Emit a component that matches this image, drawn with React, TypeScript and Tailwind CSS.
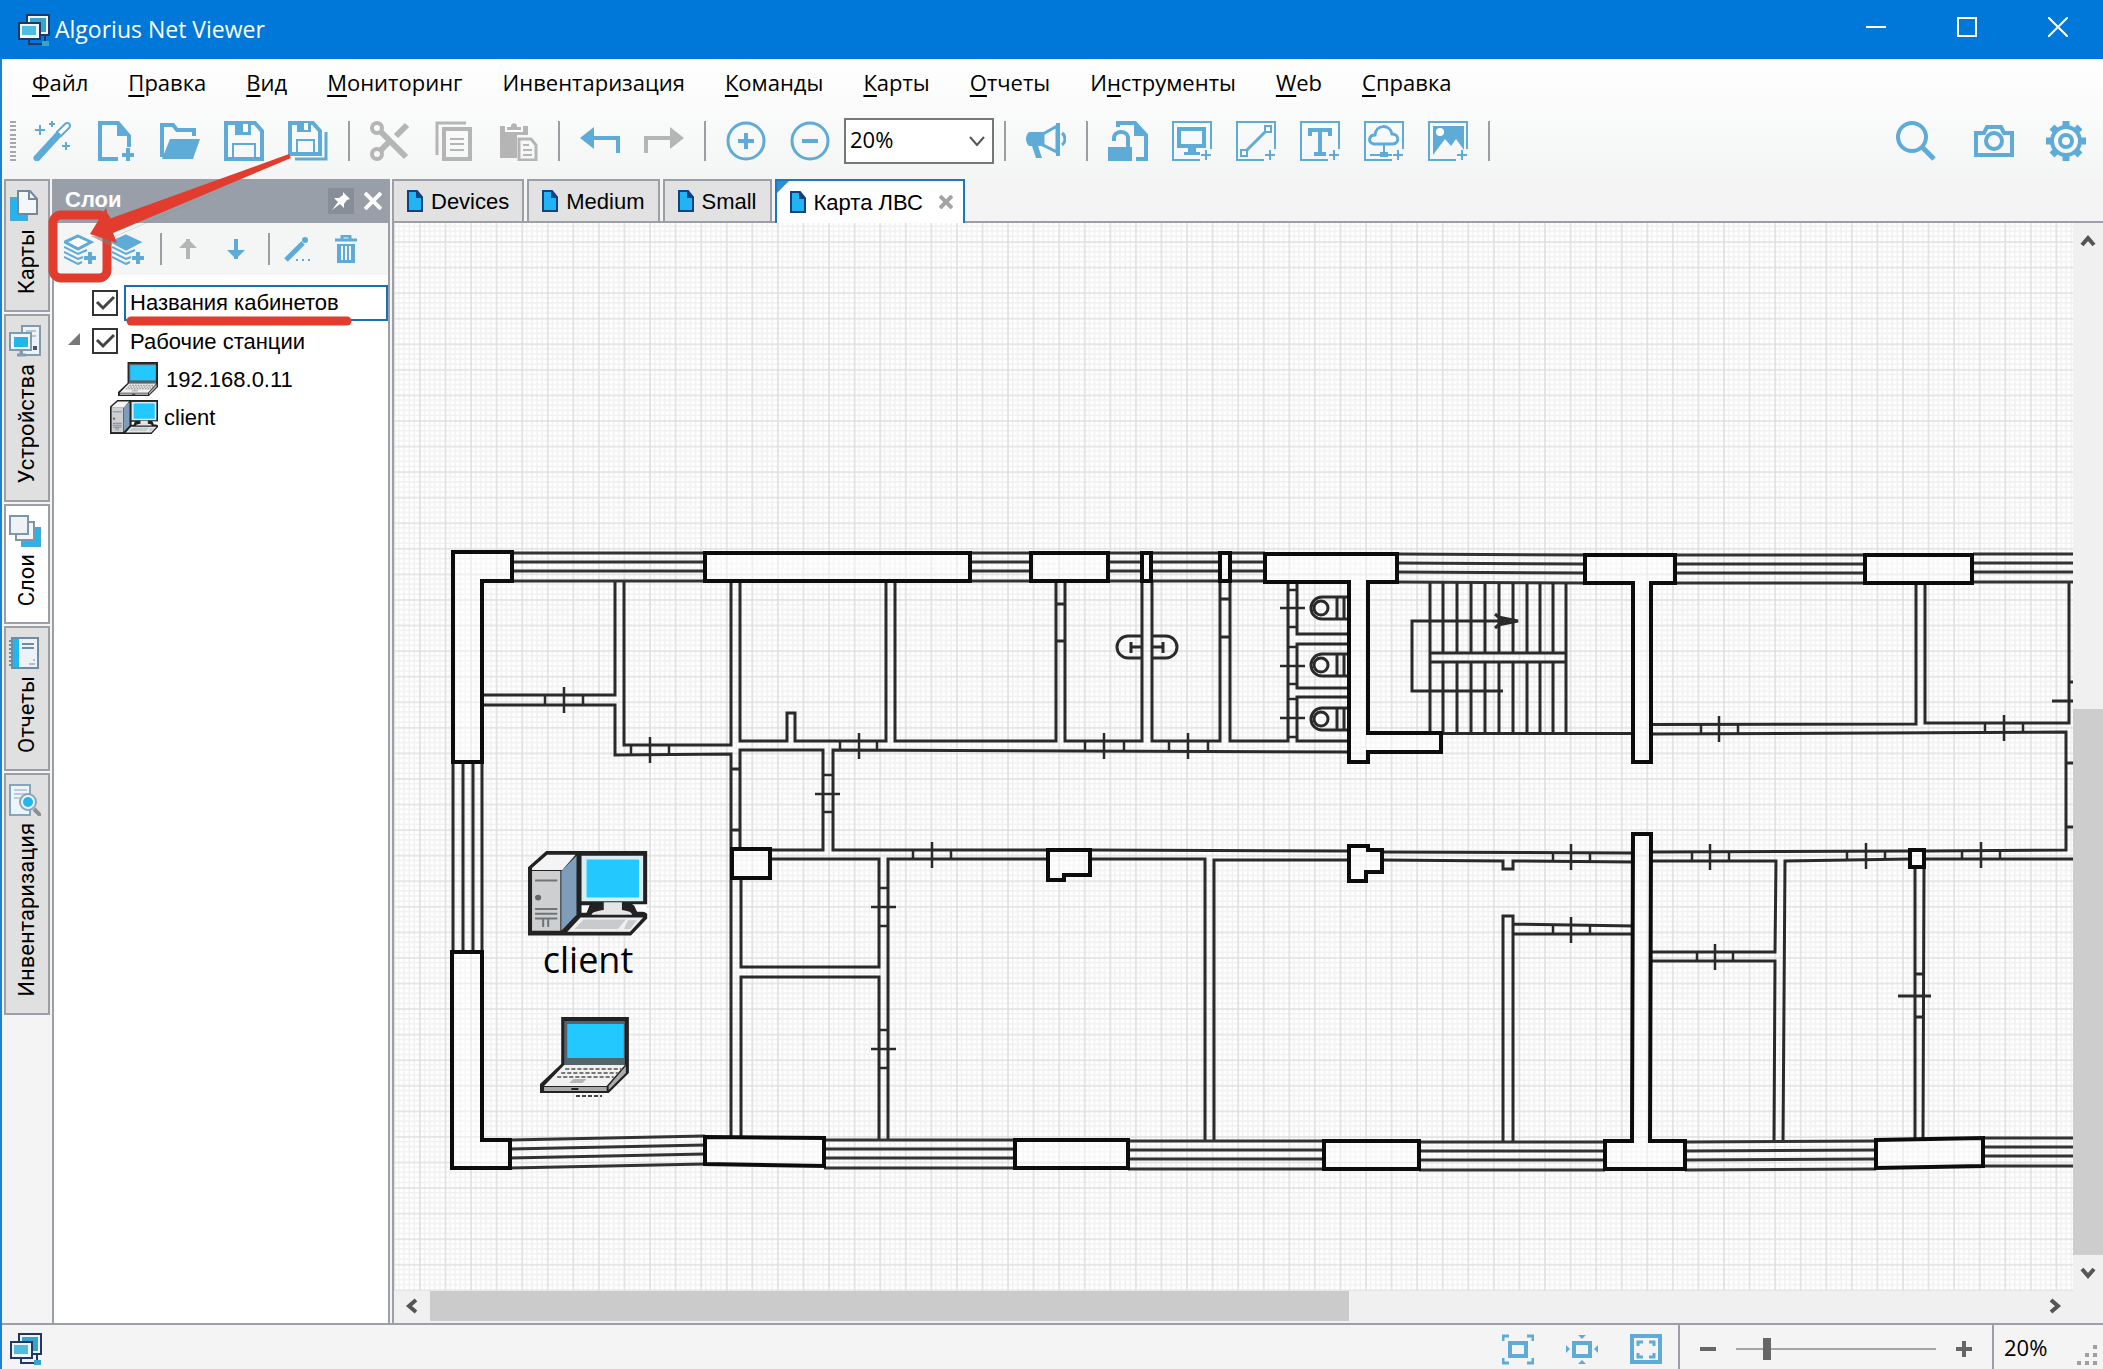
import { useState } from "react";
import type { ReactNode } from "react";

const BLUE = "#5fabd8";
const GREY = "#b5b5b5";

type IconProps = { size?: number; color?: string; children: ReactNode };

const Icon = ({ size = 40, color = BLUE, children }: IconProps) => (
  <svg width={size} height={size} viewBox={`0 0 ${size} ${size}`} fill="none" stroke={color} color={color} strokeWidth="4" aria-hidden="true">
    {children}
  </svg>
);

/* Frame with a small plus, shared by the "insert object" buttons */
const Framed = ({ children }: { children: ReactNode }) => (
  <Icon>
    <path d="M39 28V1H1v38h27M34 29v10M29 34h10" strokeWidth="2" />
    {children}
  </Icon>
);

const WandIcon = () => (
  <Icon>
    <path d="M5 37 27 13" strokeWidth="7" strokeLinecap="round" />
    <path d="m25 11 8-8c3-3 7 1 4 4l-8 8z" strokeWidth="2" fill="#fff" />
    <path d="M8 4v10M3 9h10M20 0v6M17 3h6M34 21v8M30 25h8" strokeWidth="2" />
  </Icon>
);

const NewIcon = () => (
  <Icon>
    <path d="M22 38H4V2h18l11 13v11" />
    <path d="M21 0v15h13z" fill={BLUE} stroke="none" />
    <path d="M32 27v13M26 34h12" />
  </Icon>
);

const OpenIcon = () => (
  <Icon>
    <path d="M2 36V4h11l4 5h17v6" />
    <path d="M10 18h30l-7 20H2z" fill={BLUE} stroke="none" />
  </Icon>
);

const SaveIcon = () => (
  <Icon>
    <path d="M2 2h29l7 8v28H2z" strokeWidth="4" />
    <path d="M11 0h16v14H11z" fill={BLUE} stroke="none" />
    <path d="M19 3h5v8h-5z" fill="#fff" stroke="none" />
    <path d="M9 38V23h22v15" strokeWidth="2" />
  </Icon>
);

const SaveAllIcon = () => (
  <Icon>
    <path d="M2 2h23l7 8v23H2z" />
    <path d="M9 0h14v11H9z" fill={BLUE} stroke="none" />
    <path d="M16 2h4v7h-4z" fill="#fff" stroke="none" />
    <path d="M9 32V19h17v13" strokeWidth="2" />
    <path d="M38 11v27H7" strokeWidth="3" />
  </Icon>
);

const CutIcon = () => (
  <Icon color={GREY}>
    <circle cx="7" cy="7" r="5" strokeWidth="4" />
    <circle cx="7" cy="33" r="5" strokeWidth="4" />
    <path d="m11 29 10-10M26 15 37 4" strokeWidth="6" />
    <path d="m10 10 26 26" strokeWidth="6" />
  </Icon>
);

const CopyIcon = () => (
  <Icon color={GREY}>
    <path d="M3 34V2h29" strokeWidth="3" />
    <path d="M10 8h26v30H10z" />
    <path d="M16 18h14M16 23h14M16 29h14" strokeWidth="2" />
  </Icon>
);

const PasteIcon = () => (
  <Icon color={GREY}>
    <path d="M2 5h28v9H19v23H2z" fill={GREY} stroke="none" />
    <path d="M8 10V5h4c0-5 8-5 8 0h4v5z" fill={GREY} stroke="#fff" strokeWidth="2" />
    <path d="M21 18h12l5 6v15H21z" strokeWidth="3" />
    <path d="M25 24h6M25 29h9M25 34h9" strokeWidth="2" />
  </Icon>
);

const UndoIcon = () => (
  <Icon>
    <path d="M10 17h28v15" strokeWidth="4" />
    <path d="M0 17 14 6v22z" fill={BLUE} stroke="none" />
  </Icon>
);

const RedoIcon = () => (
  <Icon color={GREY}>
    <path d="M30 17H2v15" strokeWidth="4" />
    <path d="M40 17 26 6v22z" fill={GREY} stroke="none" />
  </Icon>
);

const ZoomInIcon = () => (
  <Icon>
    <circle cx="20" cy="20" r="18" strokeWidth="3" />
    <path d="M20 12v16M12 20h16" />
  </Icon>
);

const ZoomOutIcon = () => (
  <Icon>
    <circle cx="20" cy="20" r="18" strokeWidth="3" />
    <path d="M12 20h16" />
  </Icon>
);

const MegaphoneIcon = () => (
  <Icon>
    <path d="M3 11h15v14h-6l4 12h-6L6 25H3c-4-4-4-10 0-14z" fill={BLUE} stroke="none" />
    <path d="M17 13 31 5v26l-14-7z" strokeWidth="3" />
    <path d="M32 2v33" strokeWidth="4" />
    <path d="M36 12c4 3 4 9 0 12" strokeWidth="3" />
  </Icon>
);

const UnlockIcon = () => (
  <Icon>
    <path d="M0 26h24v14H0z" fill={BLUE} stroke="none" />
    <path d="M6 20v-3c0-8 14-8 14 0v9" strokeWidth="4" />
    <path d="M10 6V2h17l11 12v24H28" strokeWidth="4" />
    <path d="M26 1v14h13z" fill={BLUE} stroke="none" />
  </Icon>
);

const ShapeMonitorIcon = () => (
  <Framed>
    <path d="M7 8h25v17H7z" strokeWidth="4" />
    <path d="M16 26h8v5h4v3H12v-3h4z" fill={BLUE} stroke="none" />
  </Framed>
);

const ShapeLineIcon = () => (
  <Framed>
    <path d="M10 30 30 10" strokeWidth="3" />
    <path d="M5 29h6v6H5zM29 5h6v6h-6z" strokeWidth="2" fill="#fff" />
  </Framed>
);

const ShapeTextIcon = () => (
  <Framed>
    <path d="M10 15V9h20v6" strokeWidth="4" />
    <path d="M20 8v24M14 33h12" strokeWidth="4" />
  </Framed>
);

const ShapeCloudIcon = () => (
  <Framed>
    <path d="M10 23c-7-1-5-9 1-9 1-11 15-11 17-1 7 0 8 9 1 10z" strokeWidth="3" />
    <path d="M20 24v9M6 34h22" strokeWidth="2" />
    <path d="M16 31h8v5h-8z" fill={BLUE} stroke="none" />
  </Framed>
);

const ShapeImageIcon = () => (
  <Framed>
    <path d="M5 5h31v24l-8-11-5 7-6-7L5 34z" fill={BLUE} stroke="none" />
    <circle cx="12" cy="11" r="4" fill="#fff" stroke="none" />
  </Framed>
);

const SearchIcon = () => (
  <Icon>
    <circle cx="16" cy="16" r="14" strokeWidth="4" />
    <path d="m27 27 11 11" strokeWidth="5" />
  </Icon>
);

const CameraIcon = () => (
  <Icon>
    <path d="M2 12h8l3-6h14l3 6h8v22H2z" />
    <circle cx="20" cy="20" r="8" />
  </Icon>
);

const GearIcon = () => (
  <Icon>
    <circle cx="20" cy="20" r="14" strokeWidth="4" />
    <circle cx="20" cy="20" r="6" strokeWidth="4" />
    <path d="M20 0v6M20 34v6M0 20h6M34 20h6M6 6l5 5M29 29l5 5M6 34l5-5M29 11l5-5" strokeWidth="7" />
  </Icon>
);

const Logo = () => (
  <svg width="32" height="32" viewBox="0 0 32 32" aria-hidden="true">
    <path d="M9 1h22v20H9z" fill="#eef8fc" stroke="#1f3868" strokeWidth="2" />
    <path d="M12 4h16v14H12z" fill="#38a3cd" />
    <path d="M1 9h21v16H1z" fill="#eef8fc" stroke="#1f3868" strokeWidth="2" />
    <path d="M4 12h14v9H4z" fill="#4fbde0" />
    <path d="M11 25v5h14M27 21v7" fill="none" stroke="#1f3868" strokeWidth="2" />
    <path d="M24 27h7v5h-7z" fill="#38a3cd" />
  </svg>
);

/* Desktop computer, used in the layer tree and on the map */
const PcGlyph = () => (
  <g>
    <path d="M0 17 18 0h100v56H103l15 10v5l-16 18H0z" fill="#222" />
    <path d="M4 18 19 4h28L34 20H4z" fill="#f4f4f4" />
    <path d="M4 21h28v63H4z" fill="#cdcfd1" />
    <path d="M33 21 48 5v62L33 84z" fill="#7d9dbb" />
    <path d="M7 31h22M7 61h22M7 66h22M7 71h22M15 71v9M20 71v9" stroke="#70757a" strokeWidth="2" />
    <circle cx="10" cy="49" r="3" fill="#666" />
    <path d="M53 5h61v48H53z" fill="#d9eef3" />
    <path d="M58 9h52v40H58z" fill="#22c8ff" />
    <path d="M53 57h8l-3 8h-5zM105 57h12v7h-9z" fill="#fff" />
    <path d="M75 54h18v8c8 1 10 3 10 5H63c0-3 6-4 12-5z" fill="#e4e6e6" />
    <path d="M52 70h62L101 85H39z" fill="#efefef" />
    <path d="M55 72h42l-8 10H46zM99 73h9l-7 9h-6z" fill="#c7cbcd" />
  </g>
);

const LaptopGlyph = () => (
  <g>
    <path d="M21 0h67v56L68 76H0V67l21-20z" fill="#222" />
    <path d="M24 4h60v44H24z" fill="#55646c" />
    <path d="M27 7h56v34H27z" fill="#22c8ff" />
    <path d="M24 48h60L66 69H4z" fill="#f1f1f1" />
    <path d="M4 70h62v4H4zM68 69l17-20v7L68 73z" fill="#aaa" />
    <path d="M25 52h56M21 56h56M17 60h56" stroke="#777" strokeWidth="2" strokeDasharray="4 2" />
    <path d="M33 62h13l-4 4H29z" fill="#b5b5b5" />
    <path d="M31 71h7v2h-7z" fill="#222" />
  </g>
);

const Separator = () => <div className="mx-2 h-10 w-[2px] shrink-0 bg-[#9a9fa4]" />;

const ToolButton = ({ label, children, disabled }: { label: string; children: ReactNode; disabled?: boolean }) => (
  <button type="button" aria-label={label} disabled={disabled} className="flex h-12 w-16 shrink-0 items-center justify-center">
    {children}
  </button>
);

const TitleBar = () => (
  <header className="flex h-[59px] shrink-0 items-center bg-[#0078d9] text-white">
    <div className="flex flex-1 items-center gap-[5px] pl-[18px]">
      <Logo />
      <h1 className="font-['Open_Sans',sans-serif] text-[23px]">Algorius Net Viewer</h1>
    </div>
    <div className="flex h-full items-start">
      <button type="button" aria-label="Minimize" className="flex h-[54px] w-[91px] items-center justify-center">
        <svg width="20" height="20" viewBox="0 0 20 20" stroke="#fff" strokeWidth="2"><path d="M0 10h20" /></svg>
      </button>
      <button type="button" aria-label="Maximize" className="flex h-[54px] w-[91px] items-center justify-center">
        <svg width="20" height="20" viewBox="0 0 20 20" fill="none" stroke="#fff" strokeWidth="2"><path d="M1 1h18v18H1z" /></svg>
      </button>
      <button type="button" aria-label="Close" className="flex h-[54px] w-[91px] items-center justify-center">
        <svg width="20" height="20" viewBox="0 0 20 20" stroke="#fff" strokeWidth="2"><path d="m0 0 20 20M20 0 0 20" /></svg>
      </button>
    </div>
  </header>
);

/* [before, underlined letter, after] */
const menuItems = [
  ["", "Ф", "айл"],
  ["", "П", "равка"],
  ["", "В", "ид"],
  ["", "М", "ониторинг"],
  ["Инвентаризация", "", ""],
  ["", "К", "оманды"],
  ["", "К", "арты"],
  ["", "О", "тчеты"],
  ["И", "н", "струменты"],
  ["", "W", "eb"],
  ["", "С", "правка"],
];

const MenuBar = () => (
  <nav className="flex h-[46px] shrink-0 items-center gap-10 pl-[30px] font-['Open_Sans',sans-serif] text-[22px] text-black">
    {menuItems.map(([before, key, after]) => (
      <button type="button" key={before + key + after} className="whitespace-nowrap">
        {before}
        {key && <span className="underline decoration-2 underline-offset-4">{key}</span>}
        {after}
      </button>
    ))}
  </nav>
);

const ToolBar = () => {
  const [zoom, setZoom] = useState("20%");
  return (
    <div className="flex h-[72px] shrink-0 items-center pl-2">
      <div className="mr-1 flex h-10 w-[6px] flex-col justify-between">
        {Array.from({ length: 10 }, (_, i) => (
          <span key={i} className="h-[2px] bg-[#a5a8ab]" />
        ))}
      </div>
      <ToolButton label="Мастер"><WandIcon /></ToolButton>
      <ToolButton label="Создать"><NewIcon /></ToolButton>
      <ToolButton label="Открыть"><OpenIcon /></ToolButton>
      <ToolButton label="Сохранить"><SaveIcon /></ToolButton>
      <ToolButton label="Сохранить все"><SaveAllIcon /></ToolButton>
      <Separator />
      <ToolButton label="Вырезать" disabled><CutIcon /></ToolButton>
      <ToolButton label="Копировать" disabled><CopyIcon /></ToolButton>
      <ToolButton label="Вставить" disabled><PasteIcon /></ToolButton>
      <Separator />
      <ToolButton label="Отменить"><UndoIcon /></ToolButton>
      <ToolButton label="Повторить" disabled><RedoIcon /></ToolButton>
      <Separator />
      <ToolButton label="Увеличить"><ZoomInIcon /></ToolButton>
      <ToolButton label="Уменьшить"><ZoomOutIcon /></ToolButton>
      <div className="relative mx-[2px] h-[46px] w-[150px] shrink-0">
        <select
          aria-label="Масштаб"
          value={zoom}
          onChange={(e) => setZoom(e.target.value)}
          className="h-full w-full appearance-none rounded-none border-2 border-[#777] bg-white pb-1 pl-1 font-['Open_Sans',sans-serif] text-[22px] text-black"
        >
          <option>20%</option>
          <option>50%</option>
          <option>100%</option>
        </select>
        <svg className="pointer-events-none absolute top-[18px] right-[9px]" width="16" height="12" viewBox="0 0 16 12" fill="none" stroke="#555" strokeWidth="2">
          <path d="m1 1 7 8 7-8" />
        </svg>
      </div>
      <Separator />
      <ToolButton label="Оповещения"><MegaphoneIcon /></ToolButton>
      <Separator />
      <ToolButton label="Блокировка карты"><UnlockIcon /></ToolButton>
      <ToolButton label="Добавить устройство"><ShapeMonitorIcon /></ToolButton>
      <ToolButton label="Добавить линию"><ShapeLineIcon /></ToolButton>
      <ToolButton label="Добавить текст"><ShapeTextIcon /></ToolButton>
      <ToolButton label="Добавить сеть"><ShapeCloudIcon /></ToolButton>
      <ToolButton label="Добавить изображение"><ShapeImageIcon /></ToolButton>
      <Separator />
      <div className="ml-auto flex items-center gap-8 pr-[17px]">
        <button type="button" aria-label="Поиск" className="mr-[6px]"><SearchIcon /></button>
        <button type="button" aria-label="Снимок"><CameraIcon /></button>
        <button type="button" aria-label="Настройки"><GearIcon /></button>
      </div>
    </div>
  );
};

const MapsTabIcon = () => (
  <Icon size={32} color="#74879b">
    <path d="M2 8h16v22H2z" fill="#22b5ee" stroke="#4ba6d2" strokeWidth="2" />
    <path d="M9 1h12l7 8v15H9z" fill="#f4f7fa" strokeWidth="2" />
    <path d="M20 1v8h8" strokeWidth="2" />
  </Icon>
);

const DevicesTabIcon = () => (
  <Icon size={32} color="#7f9bb0">
    <path d="M13 1h18v29H13z" fill="#eef2f6" strokeWidth="2" />
    <path d="M17 6h10M17 11h10" strokeWidth="1" />
    <path d="M1 8h21v17H1z" fill="#eef6fa" strokeWidth="2" />
    <path d="M5 12h14v10H5z" fill="#22b5ee" stroke="none" />
    <path d="M8 30h9M12 25v5" strokeWidth="3" />
    <path d="M24 21h4v4h-4z" fill="#555" stroke="none" />
  </Icon>
);

const LayersTabIcon = () => (
  <Icon size={32} color="#7f95ab">
    <path d="M13 13h18v18H13z" fill="#22b5ee" stroke="#4ba6d2" strokeWidth="2" />
    <path d="M7 7h18v18H7z" fill="#f4f7fa" strokeWidth="2" />
    <path d="M1 1h18v18H1z" fill="#eef1f6" strokeWidth="2" />
  </Icon>
);

const ReportsTabIcon = () => (
  <Icon size={32} color="#6f8ca6">
    <path d="M3 1h26v30H3z" fill="#eef2f6" strokeWidth="2" />
    <path d="M4 2h6v28H4z" fill="#22b5ee" stroke="none" />
    <path d="M2 3v28" strokeWidth="4" strokeDasharray="2 2" />
    <path d="M13 7h12M13 11h12" strokeWidth="2" />
    <path d="M20 27h6M24 23h2" strokeWidth="1" />
  </Icon>
);

const InventoryTabIcon = () => (
  <Icon size={32} color="#86a5bd">
    <path d="M1 1h20v30H1z" fill="#eef5fa" strokeWidth="2" />
    <path d="M5 6h13M5 10h13M5 14h6" strokeWidth="1" />
    <path d="m25 25 7 7" stroke="#8a8f94" strokeWidth="4" />
    <circle cx="19" cy="18" r="8" fill="#eef5fa" strokeWidth="2" />
    <circle cx="19" cy="18" r="5" fill="#22b5ee" stroke="none" />
  </Icon>
);

const sideTabs = [
  { label: "Карты", icon: <MapsTabIcon /> },
  { label: "Устройства", icon: <DevicesTabIcon /> },
  { label: "Слои", icon: <LayersTabIcon />, active: true },
  { label: "Отчеты", icon: <ReportsTabIcon /> },
  { label: "Инвентаризация", icon: <InventoryTabIcon /> },
];

const SideTabs = () => (
  <div className="flex w-[50px] shrink-0 flex-col items-center gap-[2px]">
    {sideTabs.map((tab) => (
      <button
        type="button"
        key={tab.label}
        className={`flex w-[46px] flex-col items-center gap-[7px] border-2 border-[#9c9fa5] pt-[9px] pb-4 ${tab.active ? "bg-white" : "bg-[#e0e0e0]"}`}
      >
        <span className="mr-1">{tab.icon}</span>
        <span className="rotate-180 font-['Roboto',sans-serif] text-[22px] leading-6 whitespace-nowrap text-black [writing-mode:vertical-rl]">
          {tab.label}
        </span>
      </button>
    ))}
  </div>
);

const LayerIcon = ({ filled }: { filled?: boolean }) => (
  <Icon size={32}>
    <path d="M14 3 27 9l-13 7L1 9z" strokeWidth="3" fill={filled ? BLUE : "#fff"} />
    <path d="m0 14 14 7 9-4M0 19l14 7 5-2M0 24l14 7 4-2" strokeWidth="2" />
    <path d="M26 19v12M20 25h12" strokeWidth="4" />
  </Icon>
);

const Annotation = () => (
  <svg className="pointer-events-none absolute top-[-26px] left-[-6px] z-10" width="310" height="180" viewBox="48 153 310 180" aria-hidden="true">
    <rect x="53" y="215" width="54" height="63" rx="8" fill="none" stroke="#e23c2f" strokeWidth="9" />
    <path d="m291 160-178 77-22-1 20 10 3-9z" fill="#877" opacity="0.6" />
    <path d="m289 154-180 65-3-11-16 26 27 9-4-10 178-75z" fill="#e23c2f" />
    <path d="M131 321h216" stroke="#e23c2f" strokeWidth="9" strokeLinecap="round" />
  </svg>
);

const CheckBox = ({ label }: { label: string }) => (
  <span className="relative h-[26px] w-[26px] shrink-0">
    <input type="checkbox" defaultChecked aria-label={label} className="peer block h-[26px] w-[26px] appearance-none border-2 border-[#333] bg-white" />
    <svg className="pointer-events-none absolute inset-0 hidden peer-checked:block" width="26" height="26" viewBox="0 0 26 26" fill="none" stroke="#444" strokeWidth="3">
      <path d="m5 12 6 6L22 7" />
    </svg>
  </span>
);

const LayersPanel = () => (
  <section className="relative flex w-[338px] shrink-0 flex-col border-x-2 border-[#9c9fa5] bg-white">
    <div className="flex h-11 shrink-0 items-center bg-[#989fa9] pr-[5px] pl-[11px]">
      <h2 className="flex-1 pb-[3px] font-['Liberation_Sans',sans-serif] text-[22px] font-bold text-white">Слои</h2>
      <button type="button" aria-label="Закрепить" className="mr-[9px] flex h-[26px] w-[26px] items-center justify-center bg-[#878e98]">
        <svg width="20" height="20" viewBox="0 0 20 20" fill="#fff"><path d="m12 1 7 7-3 1-3 4v4l-4-4-8 6 6-8-4-4h5l4-3z" /></svg>
      </button>
      <button type="button" aria-label="Закрыть панель" className="flex h-[26px] w-5 items-center justify-center">
        <svg width="18" height="18" viewBox="0 0 18 18" stroke="#fff" strokeWidth="4"><path d="m1 1 16 16M17 1 1 17" /></svg>
      </button>
    </div>

    <div className="flex h-[52px] shrink-0 items-center bg-[#f4f5f5] pl-[10px]">
      <button type="button" aria-label="Добавить слой"><LayerIcon /></button>
      <button type="button" aria-label="Добавить вложенный слой" className="ml-4"><LayerIcon filled /></button>
      <div className="mx-4 h-8 w-[2px] bg-[#9a9fa4]" />
      <button type="button" aria-label="Вверх" disabled>
        <Icon size={20} color={GREY}>
          <path d="M10 0v20" strokeWidth="4" /><path d="M10 0 19 9H1z" fill={GREY} stroke="none" />
        </Icon>
      </button>
      <button type="button" aria-label="Вниз" className="ml-7">
        <Icon size={20}>
          <path d="M10 0v20" strokeWidth="4" /><path d="m10 20 9-9H1z" fill={BLUE} stroke="none" />
        </Icon>
      </button>
      <div className="mr-[14px] ml-[22px] h-8 w-[2px] bg-[#9a9fa4]" />
      <button type="button" aria-label="Переименовать">
        <Icon size={26}>
          <path d="M2 24 19 7" strokeWidth="5" /><circle cx="21" cy="4" r="3" fill={BLUE} stroke="none" />
          <path d="M12 24h14" strokeWidth="2" strokeDasharray="2 4" />
        </Icon>
      </button>
      <button type="button" aria-label="Удалить слой" className="ml-[22px]">
        <Icon size={28}>
          <path d="M3 5h22M10 4V1h8v3" strokeWidth="3" />
          <path d="M5 9h18v19H5z" fill={BLUE} stroke="none" />
          <path d="M10 11v14M14 11v14M18 11v14" stroke="#f4f5f5" strokeWidth="2" />
        </Icon>
      </button>
    </div>

    <div className="flex flex-1 flex-col pt-[9px] font-['Liberation_Sans',sans-serif] text-[22px] text-black">
      <div className="flex h-[38px] items-center gap-[6px] pl-[38px]">
        <CheckBox label="Показать слой Названия кабинетов" />
        <input
          aria-label="Имя слоя"
          defaultValue="Названия кабинетов"
          className="h-9 min-w-0 flex-1 border-2 border-[#1a6fb0] bg-white pl-1 outline-none"
        />
      </div>
      <div className="flex h-[38px] items-center pl-[14px]">
        <svg width="12" height="12" viewBox="0 0 12 12" className="mr-3 mb-1"><path d="M12 0v12H0z" fill="#777" /></svg>
        <CheckBox label="Показать слой Рабочие станции" />
        <span className="ml-3">Рабочие станции</span>
      </div>
      <div className="flex h-[38px] items-center gap-2 pl-16">
        <svg width="40" height="34" viewBox="0 0 88 76" preserveAspectRatio="none"><LaptopGlyph /></svg>
        <span>192.168.0.11</span>
      </div>
      <div className="flex h-[38px] items-center gap-[6px] pl-14">
        <svg width="48" height="34" viewBox="0 0 118 89" preserveAspectRatio="none"><PcGlyph /></svg>
        <span>client</span>
      </div>
    </div>

    <Annotation />
  </section>
);

const docTabs = [{ label: "Devices" }, { label: "Medium" }, { label: "Small" }, { label: "Карта ЛВС", active: true }];

const DocTabs = () => (
  <div className="flex h-11 shrink-0 items-stretch gap-[3px] border-b-2 border-[#9c9fa5]">
    {docTabs.map((tab) => (
      <div
        key={tab.label}
        className={
          tab.active
            ? "relative -mb-[2px] flex items-center border-2 border-b-0 border-[#1b78bd] bg-white pr-[10px] pl-[13px]"
            : "flex items-center border-2 border-b-0 border-[#9c9fa5] bg-[#e2e2e2] pr-[13px] pl-[13px]"
        }
      >
        {tab.active && (
          <svg className="absolute top-0 left-0" width="12" height="12" viewBox="0 0 12 12"><path d="M0 0h12L0 12z" fill="#2a8fd8" /></svg>
        )}
        <button type="button" className="flex items-center gap-2 font-['Liberation_Sans',sans-serif] text-[22px] whitespace-nowrap text-black">
          <svg width="16" height="22" viewBox="0 0 16 22"><path d="M1 1h9l5 6v14H1z" fill="#20b4f4" stroke="#14417c" strokeWidth="2" /><path d="M9 1v7h6z" fill="#14417c" /></svg>
          {tab.label}
        </button>
        {tab.active && (
          <button type="button" aria-label="Закрыть карту" className="ml-4">
            <svg width="14" height="14" viewBox="0 0 14 14" stroke="#a3a3a3" strokeWidth="4"><path d="m1 1 12 12M13 1 1 13" /></svg>
          </button>
        )}
      </div>
    ))}
  </div>
);

/* Load-bearing walls, heavy outline */
const heavyWalls = [
  "M453 552H512V581H482V762H453Z",
  "M705 553H970V581H705Z",
  "M1031 553H1108V581H1031Z",
  "M1142 553H1151V581H1142Z",
  "M1220 553H1230V581H1220Z",
  "M1265 554H1397V582H1368V733H1441V752H1368V762H1349V582H1265Z",
  "M1585 555H1675V583H1651V762H1633V583H1585Z",
  "M1865 555H1972V583H1865Z",
  "M452 952H482V1140H510V1168H452Z",
  "M732 849H770V878H732Z",
  "M1048 850H1090V875H1064V880H1048Z",
  "M1349 846H1368V850H1382V872H1366V881H1349Z",
  "M1633 834H1651L1650 1141H1685V1169H1605V1141H1632Z",
  "M1910 850H1924V867H1910Z",
  "M705 1137 824 1138V1166L705 1164Z",
  "M1015 1140H1128V1168H1015Z",
  "M1324 1141H1419V1169H1324Z",
  "M1876 1140 1983 1138V1166L1876 1168Z",
];

/* Window strips: [x1, y1, x2, y2] of the outer line, repeated three more times */
const windowStrips = [
  [512, 553, 705, 553],
  [970, 553, 1031, 553],
  [1108, 553, 1142, 553],
  [1151, 553, 1220, 553],
  [1230, 553, 1265, 553],
  [1397, 554, 1585, 555],
  [1675, 555, 1865, 555],
  [1973, 554, 2120, 554],
  [510, 1140, 705, 1136],
  [824, 1140, 1015, 1140],
  [1128, 1141, 1324, 1141],
  [1419, 1142, 1605, 1142],
  [1685, 1142, 1876, 1141],
  [1983, 1138, 2120, 1138],
];

const partitions = [
  "M453 762V952M463 762V952M473 762V952M482 762V952",
  "M482 695H615V581M482 705H615V755L731 754V1137M624 581V745H731V581",
  "M740 581V741H787V713H795V741H886V581M740 849V750H823V850H771",
  "M895 581V741H1056V581M1065 581V741H1142V581M1152 581V741H1220V581M1230 581V741H1288V581",
  "M1297 581V634H1350M1350 644H1297V688H1350M1350 697H1297V741H1350M1350 752 833 750V850L1048 850",
  "M771 859H879V967H741V878M888 1140V859H1048M741 1137V977H879V1140",
  "M1090 850 1349 851M1090 859H1205V1141M1214 1141V860H1349",
  "M1382 852 1634 853M1382 860 1503 861V869H1513V861L1634 862",
  "M1503 1141V916H1513V1141M1513 924 1634 926M1513 934H1634",
  "M1651 724.5 1916 724V583M1925 583V723H2069V583M1651 734 2066 732V850L1925 851",
  "M1441 733.500H1634",
  "M1651 852 1911 851M1651 861H1776L1775 952H1651M1651 961H1775L1774 1141M1783 1141 1785 861 1911 859M1925 859H2120",
  "M1915 867V1139M1924 867 1923 1139",
  "M2069 682h10M2052 701h30M2066 763h20M2066 827h20",
];

/* Doors in horizontal walls: [left, middle, right, wall top] */
const hDoors = [
  [545, 564, 583, 695],
  [631, 650, 669, 745],
  [840, 859, 877, 741],
  [1085, 1104, 1124, 741],
  [1169, 1188, 1208, 741],
  [913, 932, 951, 850],
  [1553, 1571, 1590, 852],
  [1553, 1571, 1590, 925],
  [1701, 1719, 1738, 724],
  [1985, 2004, 2023, 723],
  [1692, 1710, 1729, 852],
  [1697, 1715, 1733, 952],
  [1847, 1866, 1885, 851],
  [1962, 1981, 2000, 850],
];

/* Doors in vertical walls: [top, middle, bottom, wall left] */
const vDoors = [
  [775, 794, 812, 823],
  [888, 907, 926, 879],
  [1030, 1049, 1068, 879],
  [590, 608, 627, 1288],
  [647, 666, 684, 1288],
  [699, 718, 737, 1288],
];

const steps = [1430, 1443, 1457, 1471, 1485, 1499, 1513, 1527, 1540, 1553, 1566];

const FloorPlan = () => (
  <g fill="none" stroke="#2a2a2a" strokeWidth="3">
    {partitions.map((d) => <path key={d} d={d} />)}
    {windowStrips.map(([x1, y1, x2, y2]) => (
      <path key={x1 + "-" + y1} stroke="#333" d={[0, 9, 18, 28].map((o) => `M${x1} ${y1 + o}L${x2} ${y2 + o}`).join("")} />
    ))}
    {hDoors.map(([l, m, r, y]) => (
      <path key={m + "h" + y} strokeWidth="2.500" d={`M${l} ${y}v9M${r} ${y}v9M${m} ${y - 8}v26`} />
    ))}
    {vDoors.map(([t, m, b, x]) => (
      <path key={m + "v" + x} strokeWidth="2.500" d={`M${x} ${t}h9M${x} ${b}h9M${x - 8} ${m}h25`} />
    ))}
    {/* wall ticks without a door leaf */}
    <path d="M731 769h9M731 830h9M1056 604h9M1056 641h9M1220 599h10M1220 637h10" />
    <path d="M1915 974h9M1915 1017h9M1898 996h33" />

    {/* stairs */}
    {steps.map((x) => <path key={x} d={`M${x} 583V652M${x} 662V733`} />)}
    <path d="M1430 652V662M1566 652V662M1430 653H1566M1430 662H1566" />
    <path d="M1503 691H1412V621H1510" />
    <path d="m1495 614 8 7-8 7M1498 617l20 4-20 4" />

    {/* toilets */}
    {[608, 665, 719].map((y) => (
      <g key={y}>
        <path d={`M1349 ${y - 11}H1322a11 11 0 0 0 0 22H1349M1337 ${y - 11}v22M1344 ${y - 11}v22`} />
        <circle cx="1321" cy={y} r="7" />
      </g>
    ))}

    {/* wash basins */}
    <path d="M1142 636H1128a11 11 0 0 0 0 22H1142M1152 636H1166a11 11 0 0 1 0 22H1152" />
    <path d="M1131 642v11M1131 647h11M1163 642v11M1163 647h-11" />

    <g fill="#fff" fillOpacity="0.4" stroke="#0c0c0c" strokeWidth="4">
      {heavyWalls.map((d) => <path key={d} d={d} />)}
    </g>
  </g>
);

const MapCanvas = () => (
  <svg className="block h-full w-full bg-white" aria-label="Карта ЛВС">
    <defs>
      <pattern id="grid" width="25.57" height="25.57" patternUnits="userSpaceOnUse" x="50.500" y="18">
        <path d="M5.600 0V25.570M10.700 0V25.570M15.800 0V25.570M20.900 0V25.570M0 5.600H25.570M0 10.700H25.570M0 15.800H25.570M0 20.900H25.570" stroke="#f1f1f1" strokeWidth="1.500" />
        <path d="M1 0V25.570M0 1H25.570" stroke="#dfdfdf" strokeWidth="1.600" />
      </pattern>
    </defs>
    <rect width="100%" height="100%" fill="url(#grid)" />
    <g transform="translate(-394 -223)">
      <FloorPlan />
      <g transform="translate(528 851) scale(1.010 .95)"><PcGlyph /></g>
      <text x="588" y="973" textAnchor="middle" fontFamily="Open Sans, sans-serif" fontSize="36" fill="#000">client</text>
      <g transform="translate(540 1017) scale(1.010 1)"><LaptopGlyph /></g>
      <path d="M576 1096h26" stroke="#444" strokeWidth="2" strokeDasharray="4 2" />
    </g>
  </svg>
);

const Arrow = ({ d }: { d: string }) => (
  <svg width="16" height="16" viewBox="0 0 16 16" fill="none" stroke="#555" strokeWidth="4"><path d={d} /></svg>
);

const Workspace = () => (
  <main className="ml-[2px] flex min-w-0 flex-1 flex-col">
    <DocTabs />
    <div className="flex min-h-0 flex-1 flex-col border-l-2 border-[#9c9fa5]">
      <div className="flex min-h-0 flex-1">
        <div className="min-w-0 flex-1 overflow-hidden"><MapCanvas /></div>
        <div className="flex w-[30px] shrink-0 flex-col bg-[#f0f0f0]">
          <button type="button" aria-label="Прокрутить вверх" className="flex h-9 items-center justify-center"><Arrow d="m2 12 6-7 6 7" /></button>
          <div className="flex-[450]" />
          <div className="flex-[546] bg-[#cdcdcd]" />
          <button type="button" aria-label="Прокрутить вниз" className="flex h-9 items-center justify-center"><Arrow d="m2 4 6 7 6-7" /></button>
        </div>
      </div>
      <div className="flex h-8 shrink-0 items-stretch bg-[#f0f0f0] pr-[30px] pb-[2px]">
        <button type="button" aria-label="Прокрутить влево" className="flex w-9 items-center justify-center"><Arrow d="m12 2-7 6 7 6" /></button>
        <div className="flex-[919] bg-[#cbcbcb]" />
        <div className="flex-[688]" />
        <button type="button" aria-label="Прокрутить вправо" className="flex w-9 items-center justify-center"><Arrow d="m4 2 7 6-7 6" /></button>
      </div>
    </div>
  </main>
);

const StatusBar = () => {
  const [scale, setScale] = useState(14);
  return (
    <footer className="flex h-[46px] shrink-0 items-stretch border-t-2 border-[#9c9fa5] bg-[#f4f4f4]">
      <div className="flex flex-1 items-center pt-1 pl-2"><Logo /></div>
      <div className="flex items-center gap-8 pt-1 pr-4">
        <button type="button" aria-label="По размеру окна">
          <Icon size={32}>
            <path d="M8 10h16v13H8z" strokeWidth="4" />
            <path d="M1 8V3h6M25 3h6v5M31 25v5h-6M7 30H1v-5" strokeWidth="3" />
          </Icon>
        </button>
        <button type="button" aria-label="По центру">
          <Icon size={32}>
            <path d="M8 10h16v13H8z" strokeWidth="4" />
            <path d="M16 6 12 2h8zM16 27l-4 4h8zM4 16l-4-4v8zM28 16l4-4v8z" fill={BLUE} stroke="none" />
          </Icon>
        </button>
        <button type="button" aria-label="Во весь экран">
          <Icon size={32}>
            <path d="M2 3h28v26H2z" strokeWidth="4" />
            <path d="M8 13V9h5M19 9h5v4M24 20v4h-5M13 24H8v-4" strokeWidth="3" />
          </Icon>
        </button>
      </div>
      <div className="flex items-center gap-5 border-x-2 border-[#9c9fa5] px-5 pt-1">
        <button type="button" aria-label="Мельче">
          <Icon size={16} color="#666"><path d="M0 8h16" /></Icon>
        </button>
        <input
          type="range"
          aria-label="Масштаб карты"
          value={scale}
          onChange={(e) => setScale(Number(e.target.value))}
          className="h-6 w-[200px] appearance-none bg-transparent [&::-webkit-slider-runnable-track]:h-[2px] [&::-webkit-slider-runnable-track]:bg-[#a5a5a5] [&::-webkit-slider-thumb]:-mt-[10px] [&::-webkit-slider-thumb]:h-[22px] [&::-webkit-slider-thumb]:w-2 [&::-webkit-slider-thumb]:appearance-none [&::-webkit-slider-thumb]:bg-[#666]"
        />
        <button type="button" aria-label="Крупнее">
          <Icon size={16} color="#666"><path d="M0 8h16M8 0v16" /></Icon>
        </button>
      </div>
      <div className="flex w-[109px] items-center justify-between pl-[10px]">
        <output className="font-['Open_Sans',sans-serif] text-[22px] text-black">20%</output>
        <svg width="24" height="24" viewBox="0 0 24 24" fill="#a0a0a0" className="mr-[2px] self-end">
          <path d="M16 0h4v4h-4zM8 8h4v4H8zM16 8h4v4h-4zM0 16h4v4H0zM8 16h4v4H8zM16 16h4v4h-4z" />
        </svg>
      </div>
    </footer>
  );
};

const App = () => (
  <div className="flex h-screen flex-col overflow-hidden bg-[#f4f4f4]">
    <TitleBar />
    <div className="flex min-h-0 flex-1 flex-col border-l-2 border-[#1a83d8]">
      <div className="shrink-0 bg-linear-to-b from-white to-[#f4f5f5] pb-[2px]">
        <MenuBar />
        <ToolBar />
      </div>
      <div className="flex min-h-0 flex-1">
        <SideTabs />
        <LayersPanel />
        <Workspace />
      </div>
      <StatusBar />
    </div>
  </div>
);

export default App;
